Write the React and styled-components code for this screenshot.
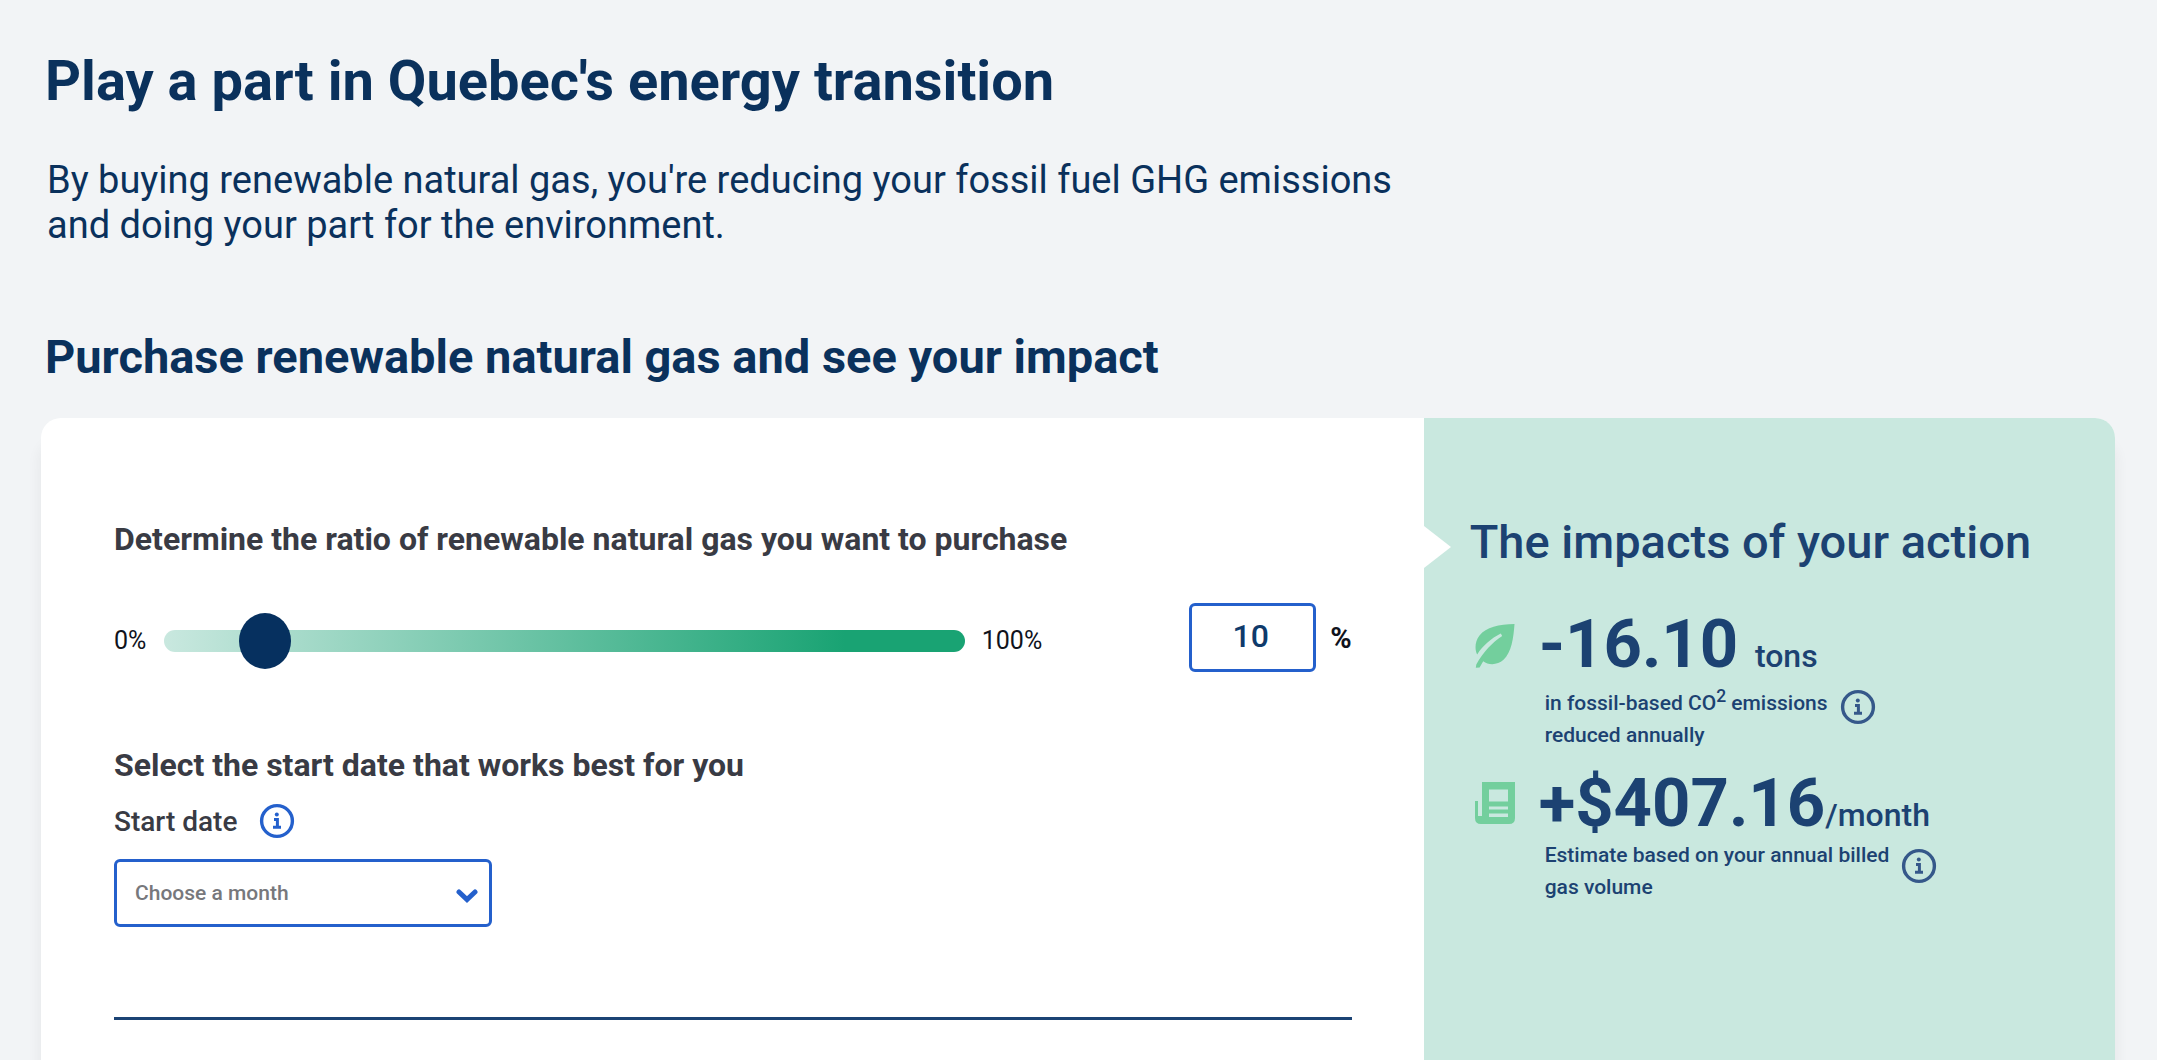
import React from "react";
import { useState } from "react";
import styled, { createGlobalStyle } from "styled-components";

const InfoIcon = () => (
  <svg viewBox="0 0 36 36" fill="none" aria-hidden="true">
    <circle cx="18" cy="18" r="15.400" stroke="currentColor" strokeWidth="3.4" />
    <circle cx="17.8" cy="11.6" r="2" fill="currentColor" />
    <path
      d="M15 16.400h3.400v7.600M14 24.200h8"
      stroke="currentColor"
      strokeWidth="3"
    />
  </svg>
);

const LeafIcon = () => (
  <svg viewBox="0 0 40 46" width="40" height="46" aria-hidden="true">
    <path
      d="M39.5 1C24 1.500 11 4 4.500 12.500C-.5 19-.2 27 2.200 31.500C8 22.500 16 15.500 25.800 10.600L27.200 13C17.500 19.500 8.500 28.500 1.300 41.500L.8 44.800L4.600 44.600L8.200 38.200C13.500 42.400 22.500 42.300 28.500 36.800C36.500 29.500 38.500 15 39.500 1Z"
      fill="#73cf9d"
    />
  </svg>
);

const BillIcon = () => (
  <svg viewBox="0 0 40 42" width="40" height="42" aria-hidden="true">
    <path
      fillRule="evenodd"
      d="M7 0H40V36Q40 42 34 42H6Q0 42 0 36V19H3V34H7ZM14 7.500V19.500H33V7.500ZM14 24.500V27.500H33V24.500ZM14 31.500V35H33V31.500Z"
      fill="#73cf9d"
    />
  </svg>
);

const App = () => {
  const [ratio, setRatio] = useState(10);

  return (
    <>
      <GlobalStyle />
      <Page>
        <Title>Play a part in Quebec's energy transition</Title>
        <Intro>
          By buying renewable natural gas, you're reducing your fossil fuel GHG
          emissions
          <br />
          and doing your part for the environment.
        </Intro>
        <Subtitle>Purchase renewable natural gas and see your impact</Subtitle>

        <Card>
          {/* PURCHASE FORM */}
          <Form>
            <Question htmlFor="ratio">
              Determine the ratio of renewable natural gas you want to purchase
            </Question>
            <RatioRow>
              <Bound>0%</Bound>
              <Slider
                id="ratio"
                type="range"
                min="0"
                max="100"
                value={ratio}
                onChange={(e) => setRatio(e.target.value)}
              />
              <Bound>100%</Bound>
              <RatioField>
                <RatioInput
                  id="ratio-value"
                  type="text"
                  value={ratio}
                  onChange={(e) => setRatio(e.target.value)}
                />
                <Percent htmlFor="ratio-value">%</Percent>
              </RatioField>
            </RatioRow>

            <Question as="h3">
              Select the start date that works best for you
            </Question>
            <DateRow>
              <DateLabel htmlFor="start-date">Start date</DateLabel>
              <InfoButton type="button" aria-label="About the start date">
                <InfoIcon />
              </InfoButton>
            </DateRow>
            <SelectBox>
              <Select id="start-date" defaultValue="">
                <option value="">Choose a month</option>
              </Select>
              <svg viewBox="0 0 22 14" width="22" height="14" aria-hidden="true">
                <path
                  d="M3 3L11 10.500L19 3"
                  fill="none"
                  stroke="#2460cc"
                  strokeWidth="5"
                  strokeLinecap="round"
                />
              </svg>
            </SelectBox>
            <Divider />
          </Form>

          {/* IMPACT PANEL */}
          <Impact>
            <ImpactTitle>The impacts of your action</ImpactTitle>
            <Metric>
              <LeafIcon />
              <div>
                <Figure>
                  -16.10 <Unit>tons</Unit>
                </Figure>
                <Note>
                  <p>
                    in fossil-based CO<sup>2</sup> emissions
                    <br />
                    reduced annually
                  </p>
                  <InfoButton type="button" $muted aria-label="About emissions">
                    <InfoIcon />
                  </InfoButton>
                </Note>
              </div>
            </Metric>
            <Metric>
              <BillIcon />
              <div>
                <Figure>
                  +$407.16<Unit>/month</Unit>
                </Figure>
                <Note>
                  <p>
                    Estimate based on your annual billed
                    <br />
                    gas volume
                  </p>
                  <InfoButton type="button" $muted aria-label="About the estimate">
                    <InfoIcon />
                  </InfoButton>
                </Note>
              </div>
            </Metric>
          </Impact>
        </Card>
      </Page>
    </>
  );
};

export default App;

const GlobalStyle = createGlobalStyle`
  * {
    box-sizing: border-box;
  }
  body {
    margin: 0;
    background: #f2f4f6;
    color: #0a315c;
    font-family: Roboto, "Liberation Sans", sans-serif;
  }
  h1, h2, h3, p {
    margin: 0;
  }
  input, select, button {
    font-family: inherit;
  }
`;

const Page = styled.main`
  display: flex;
  flex-direction: column;
  min-height: 100vh;
  padding: 51px 42px 0 41px;
`;

const Title = styled.h1`
  padding-left: 4px;
  font-size: 56px;
  line-height: 60px;
  font-weight: 700;
`;

const Intro = styled.p`
  margin: 47px 0 82px;
  padding-left: 6px;
  font-size: 38px;
  line-height: 45px;
`;

const Subtitle = styled.h2`
  padding-left: 4px;
  font-size: 47px;
  line-height: 54px;
  font-weight: 700;
`;

const Card = styled.section`
  flex: 1;
  display: grid;
  grid-template-columns: 2fr 1fr;
  margin-top: 34px;
  border-radius: 20px 20px 0 0;
  background: #fff;
  box-shadow: 0 24px 12px 4px rgba(0, 0, 0, 0.04);
`;

const Form = styled.form`
  padding: 103px 72px 38px 73px;
`;

const Question = styled.label`
  display: block;
  color: #393b44;
  font-size: 32px;
  line-height: 36px;
  font-weight: 700;
`;

const RatioRow = styled.div`
  display: flex;
  align-items: center;
  margin: 46px 0 69px;
`;

const Bound = styled.span`
  min-width: 36px;
  color: #10131c;
  font-size: 25px;
`;

const Slider = styled.input`
  appearance: none;
  flex: 1;
  height: 56px;
  margin: 0 17px 0 14px;
  background: transparent;

  &::-webkit-slider-runnable-track {
    height: 22px;
    border-radius: 11px;
    background: linear-gradient(90deg, #c9e8df, #19a373 85%);
  }
  &::-webkit-slider-thumb {
    appearance: none;
    width: 52px;
    height: 56px;
    margin-top: -17px;
    border-radius: 50%;
    background: #06305f;
  }
`;

const RatioField = styled.div`
  display: flex;
  align-items: center;
  gap: 14px;
  margin-left: 147px;
  padding-bottom: 6px;
`;

const RatioInput = styled.input`
  width: 127px;
  height: 69px;
  padding: 0 4px 4px 0;
  border: 3px solid #2460cc;
  border-radius: 6px;
  background: #fff;
  color: #0f3a6b;
  font-size: 32px;
  font-weight: 500;
  text-align: center;
`;

const Percent = styled.label`
  color: #10131c;
  font-size: 29px;
  font-weight: 700;
`;

const DateRow = styled.div`
  display: flex;
  align-items: center;
  gap: 22px;
  margin: 20px 0;
`;

const DateLabel = styled.label`
  color: #393b44;
  font-size: 28px;
  font-weight: 500;
`;

const InfoButton = styled.button`
  width: 36px;
  height: 36px;
  padding: 0;
  border: 0;
  background: none;
  color: ${(props) => (props.$muted ? "#35588a" : "#2460cc")};

  svg {
    display: block;
    width: 100%;
    height: 100%;
  }
`;

const SelectBox = styled.div`
  position: relative;
  width: 378px;
  max-width: 100%;

  svg {
    position: absolute;
    top: 30px;
    right: 14px;
    pointer-events: none;
  }
`;

const Select = styled.select`
  appearance: none;
  width: 100%;
  height: 68px;
  padding: 0 18px;
  border: 3px solid #2460cc;
  border-radius: 6px;
  background: #fff;
  color: #77787c;
  font-size: 21px;
  font-weight: 500;
`;

const Divider = styled.hr`
  height: 3px;
  margin: 90px 0 0;
  border: 0;
  background: #1b4374;
`;

const Impact = styled.aside`
  position: relative;
  padding: 97px 24px 38px 51px;
  border-top-right-radius: 20px;
  background: #c9e8df;
  color: #1c4272;

  /* pointer coming out of the form */
  &::before {
    content: "";
    position: absolute;
    top: 108px;
    left: 0;
    border: 21px solid transparent;
    border-left: 27px solid #fff;
    border-right: 0;
  }
`;

const ImpactTitle = styled.h2`
  margin-left: -5px;
  margin-bottom: 39px;
  font-size: 47px;
  line-height: 54px;
  font-weight: 500;
`;

const Metric = styled.div`
  display: flex;
  gap: 24px;
  margin-bottom: 16px;

  > svg {
    flex: none;
    margin-top: 15px;
  }
`;

const Figure = styled.p`
  font-size: 67px;
  line-height: 72px;
  font-weight: 700;
  white-space: nowrap;
`;

const Unit = styled.span`
  font-size: 32px;
  line-height: 1;
  font-weight: 500;
`;

const Note = styled.div`
  display: flex;
  gap: 12px;
  padding-left: 6px;
  font-size: 21px;
  line-height: 32px;
  font-weight: 500;

  button {
    flex: none;
    margin-top: 9px;
  }
`;
